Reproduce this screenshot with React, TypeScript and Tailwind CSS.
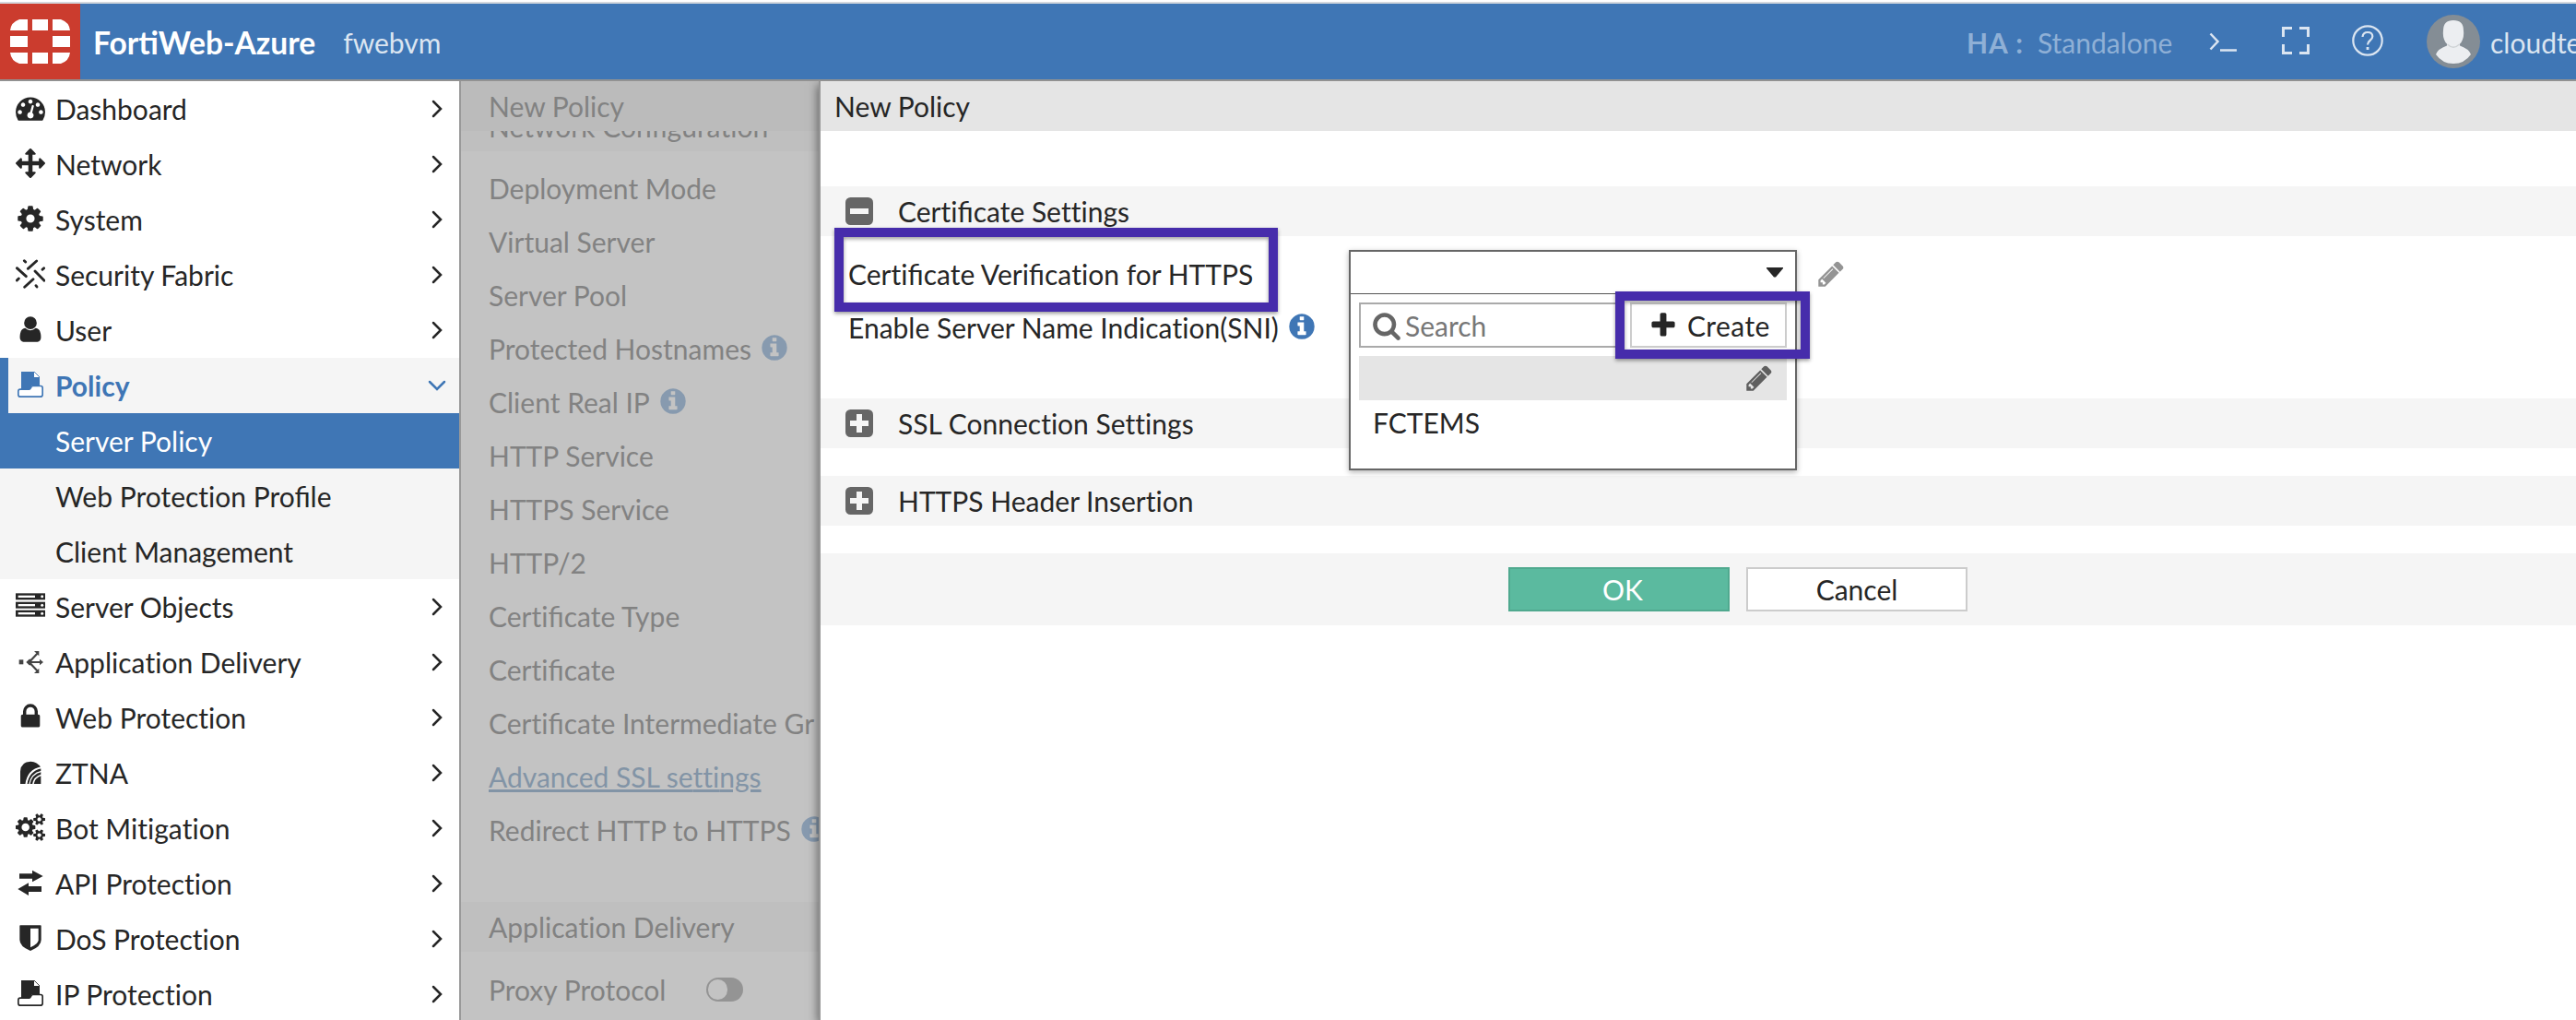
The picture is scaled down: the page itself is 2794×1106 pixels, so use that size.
import React from "react";

/* ---------- icon glyphs ---------- */

const G = {
  gauge:
    "M384 1152q0-53-37.5-90.5t-90.5-37.5-90.5 37.5-37.5 90.5 37.5 90.5 90.5 37.5 90.5-37.5 37.5-90.5zm192-448q0-53-37.5-90.5t-90.5-37.5-90.5 37.5-37.5 90.5 37.5 90.5 90.5 37.5 90.5-37.5 37.5-90.5zm428 481l101-382q6-26-7.5-48.5t-38.5-29.5-48 6.5-30 39.5l-101 382q-60 5-107 43.5t-63 98.5q-20 77 20 146t117 89 146-20 89-117q16-60-6-117t-72-91zm660-33q0-53-37.5-90.5t-90.5-37.5-90.5 37.5-37.5 90.5 37.5 90.5 90.5 37.5 90.5-37.5 37.5-90.5zm-640-640q0-53-37.5-90.5t-90.5-37.5-90.5 37.5-37.5 90.5 37.5 90.5 90.5 37.5 90.5-37.5 37.5-90.5zm448 192q0-53-37.5-90.5t-90.5-37.5-90.5 37.5-37.5 90.5 37.5 90.5 90.5 37.5 90.5-37.5 37.5-90.5zm320 448q0 261-141 483-19 29-54 29h-1402q-35 0-54-29-141-221-141-483 0-182 71-348t191-286 286-191 348-71 348 71 286 191 191 286 71 348z",
  arrows:
    "M1792 896q0 26-19 45l-256 256q-19 19-45 19t-45-19-19-45v-128h-384v384h128q26 0 45 19t19 45-19 45l-256 256q-19 19-45 19t-45-19l-256-256q-19-19-19-45t19-45 45-19h128v-384h-384v128q0 26-19 45t-45 19-45-19l-256-256q-19-19-19-45t19-45l256-256q19-19 45-19t45 19 19 45v128h384v-384h-128q-26 0-45-19t-19-45 19-45l256-256q19-19 45-19t45 19l256 256q19 19 19 45t-19 45-45 19h-128v384h384v-128q0-26 19-45t45-19 45 19l256 256q19 19 19 45z",
  cog: "M1152 896q0-106-75-181t-181-75-181 75-75 181 75 181 181 75 181-75 75-181zm512-109v222q0 12-8 23t-20 13l-185 28q-19 54-39 91 35 50 107 138 10 12 10 25t-9 23q-27 37-99 108t-94 71q-12 0-26-9l-138-108q-44 23-91 38-16 136-29 186-7 28-36 28h-222q-14 0-24.5-8.5t-11.5-21.5l-28-184q-49-16-90-37l-141 107q-10 9-25 9-14 0-25-11-126-114-165-168-7-10-7-23 0-12 8-23 15-21 51-66.5t54-70.5q-27-50-41-99l-183-27q-13-2-21-12.5t-8-23.5v-222q0-12 8-23t19-13l186-28q14-46 39-92-40-57-107-138-10-12-10-24 0-10 9-23 26-36 98.5-107.5t94.5-71.5q13 0 26 10l138 107q44-23 91-38 16-136 29-186 7-28 36-28h222q14 0 24.5 8.5t11.5 21.5l28 184q49 16 90 37l142-107q9-9 24-9 13 0 25 10 129 119 165 170 7 8 7 22 0 12-8 23-15 21-51 66.5t-54 70.5q26 50 41 98l183 28q13 2 21 12.5t8 23.5z",
  user: "M1536 1399q0 109-62.5 187t-150.5 78h-854q-88 0-150.5-78t-62.5-187q0-85 8.5-160.5t31.5-152 58.5-131 94-89 134.5-34.5q131 128 313 128t313-128q76 0 134.5 34.5t94 89 58.5 131 31.5 152 8.5 160.5zm-256-887q0 159-112.5 271.5t-271.5 112.5-271.5-112.5-112.5-271.5 112.5-271.5 271.5-112.5 271.5 112.5 112.5 271.5z",
  lock: "M640 768h512v-192q0-106-75-181t-181-75-181 75-75 181v192zm832 96v576q0 40-28 68t-68 28h-960q-40 0-68-28t-28-68v-576q0-40 28-68t68-28h32v-192q0-184 132-316t316-132 316 132 132 316v192h32q40 0 68 28t28 68z",
  cogs: "M832 896q0-106-75-181t-181-75-181 75-75 181 75 181 181 75 181-75 75-181zm768 512q0-52-38-90t-90-38-90 38-38 90q0 53 37.5 90.5t90.5 37.5 90.5-37.5 37.5-90.5zm0-1024q0-52-38-90t-90-38-90 38-38 90q0 53 37.5 90.5t90.5 37.5 90.5-37.5 37.5-90.5zm-384 421v185q0 10-7 19.5t-16 10.5l-155 24q-11 35-32 76 34 48 90 115 7 11 7 20 0 12-7 19-23 30-82.5 89.5t-78.5 59.5q-11 0-21-7l-115-90q-37 19-77 31-11 108-23 155-7 24-30 24h-186q-11 0-20-7.5t-10-17.5l-23-153q-34-10-75-31l-118 89q-7 7-20 7-11 0-21-8-144-133-144-160 0-9 7-19 10-14 41-53t47-61q-23-44-35-82l-152-24q-10-1-17-9.5t-7-19.5v-185q0-10 7-19.5t16-10.5l155-24q11-35 32-76-34-48-90-115-7-11-7-20 0-12 7-20 22-30 82-89t79-59q11 0 21 7l115 90q34-18 77-32 11-108 23-154 7-24 30-24h186q11 0 20 7.5t10 17.5l23 153q34 10 75 31l118-89q8-7 20-7 11 0 21 8 144 133 144 160 0 8-7 19-12 16-42 54t-45 60q23 48 34 82l152 23q10 2 17 10.5t7 19.5zm640 533v140q0 16-149 31-12 27-30 52 51 113 51 138 0 4-4 7-122 71-124 71-8 0-46-47t-52-68q-20 2-30 2t-30-2q-14 21-52 68t-46 47q-2 0-124-71-4-3-4-7 0-25 51-138-18-25-30-52-149-15-149-31v-140q0-16 149-31 13-29 30-52-51-113-51-138 0-4 4-7 4-2 35-20t59-34 30-16q8 0 46 46.5t52 67.5q20-2 30-2t30 2q51-71 92-112l6-2q4 0 124 70 4 3 4 7 0 25-51 138 17 23 30 52 149 15 149 31zm0-1024v140q0 16-149 31-12 27-30 52 51 113 51 138 0 4-4 7-122 71-124 71-8 0-46-47t-52-68q-20 2-30 2t-30-2q-14 21-52 68t-46 47q-2 0-124-71-4-3-4-7 0-25 51-138-18-25-30-52-149-15-149-31v-140q0-16 149-31 13-29 30-52-51-113-51-138 0-4 4-7 4-2 35-20t59-34 30-16q8 0 46 46.5t52 67.5q20-2 30-2t30 2q51-71 92-112l6-2q4 0 124 70 4 3 4 7 0 25-51 138 17 23 30 52 149 15 149 31z",
  info: "M1152 1376v-160q0-14-9-23t-23-9h-96v-512q0-14-9-23t-23-9h-320q-14 0-23 9t-9 23v160q0 14 9 23t23 9h96v320h-96q-14 0-23 9t-9 23v160q0 14 9 23t23 9h448q14 0 23-9t9-23zm-128-896v-160q0-14-9-23t-23-9h-192q-14 0-23 9t-9 23v160q0 14 9 23t23 9h192q14 0 23-9t9-23zm640 416q0 209-103 385.5t-279.5 279.5-385.5 103-385.5-103-279.5-279.5-103-385.5 103-385.5 279.5-279.5 385.5-103 385.5 103 279.5 279.5 103 385.5z",
  pencil:
    "M491 1536l91-91-235-235-91 91v107h128v128h107zm523-928q0-22-22-22-10 0-17 7l-542 542q-7 7-7 17 0 22 22 22 10 0 17-7l542-542q7-7 7-17zm-54-192l416 416-832 832h-416v-416zm683 96q0 53-37 90l-166 166-416-416 166-165q36-38 90-38 53 0 91 38l235 234q37 39 37 91z",
  search:
    "M1216 832q0-185-131.5-316.5t-316.5-131.5-316.5 131.5-131.5 316.5 131.5 316.5 316.5 131.5 316.5-131.5 131.5-316.5zm512 832q0 52-38 90t-90 38q-54 0-90-38l-343-342q-179 124-399 124-143 0-273.5-55.5t-225-150-150-225-55.5-273.5 55.5-273.5 150-225 225-150 273.5-55.5 273.5 55.5 225 150 150 225 55.5 273.5q0 220-124 399l343 343q37 37 37 90z",
  plus: "M1600 736v192q0 40-28 68t-68 28h-416v416q0 40-28 68t-68 28h-192q-40 0-68-28t-28-68v-416h-416q-40 0-68-28t-28-68v-192q0-40 28-68t68-28h416v-416q0-40 28-68t68-28h192q40 0 68 28t28 68v416h416q40 0 68 28t28 68z",
};

function Glyph({ d, className = "", viewBox = "0 0 1792 1792" }: { d: string; className?: string; viewBox?: string }) {
  return (
    <svg viewBox={viewBox} className={`size-8 shrink-0 ${className}`} fill="currentColor">
      <path d={d} />
    </svg>
  );
}

/* Lato joins "t" and "i"; keep the two letters apart while "fi" still joins. */
function T({ children, className = "" }: { children: string; className?: string }) {
  return (
    <span className={className}>
      {children.split(/(t+i)/).map((part, i) =>
        i % 2 ? (
          <span key={i} className="[font-variant-ligatures:none]">
            {part}
          </span>
        ) : (
          part
        ),
      )}
    </span>
  );
}

function Box96({ children }: { children: React.ReactNode }) {
  return (
    <svg viewBox="0 0 96 96" className="size-8 shrink-0" fill="currentColor">
      {children}
    </svg>
  );
}

const FabricIcon = () => (
  <Box96>
    <path
      d="M28 5l4 4M40 31L68 6M4 29l30 27M87 34l5-5M63 39l30 31M4 69l6-6M29 91l28-26M66 86l3 4"
      fill="none"
      stroke="currentColor"
      strokeWidth="8.5"
      strokeLinecap="round"
    />
  </Box96>
);

const TrayIcon = () => (
  <Box96>
    <path d="M18 6H60L78 24V52H52L46 66H18z" />
    <path d="M60 6V24H78z" fill="white" />
    <path d="M60 6L78 24" stroke="currentColor" strokeWidth="2.5" />
    <path
      d="M15 63.500H44Q47 63.500 49 59Q51 52.500 56 52.500H81Q87.500 52.500 87.500 59V80Q87.500 87.500 80 87.500H15Q8.500 87.500 8.500 80V70Q8.500 63.500 15 63.500z"
      fill="white"
      stroke="currentColor"
      strokeWidth="5"
    />
  </Box96>
);

const ServersIcon = () => (
  <Box96>
    {[7, 35, 62].map((y) => (
      <g key={y}>
        <rect x="0" y={y} width="96" height="21" />
        <rect x="8" y={y + 7} width="55" height="7" fill="white" />
        <circle cx="86" cy={y + 10.5} r="4.500" fill="white" />
      </g>
    ))}
  </Box96>
);

const BranchIcon = () => (
  <Box96>
    <g className="text-[#444]">
      <rect x="11" y="43" width="14" height="15" fill="currentColor" />
      <path d="M44 51L70 23M44 51H82M44 51L70 79" stroke="currentColor" strokeWidth="6.500" fill="none" />
      <path d="M34 51L44 41H50V61H44zM60 15H76V31zM60 87H76V71zM78 41L90 51L78 61z" fill="currentColor" />
    </g>
  </Box96>
);

const ZtnaIcon = () => (
  <Box96>
    <path d="M15 87V46Q17 14 49 14Q70 14 82 34V87z" />
    <g fill="none" stroke="white">
      <path d="M34 90Q40 42 84 34" strokeWidth="6" />
      <path d="M44 90Q50 53 84 46" strokeWidth="4" />
      <path d="M56 90Q60 65 84 58" strokeWidth="4.500" />
    </g>
  </Box96>
);

const SwapIcon = () => (
  <Box96>
    <path d="M12 19H54V8L89 27L54 46V35H12zM84 78H42V90L7 69L42 49V60H84z" />
  </Box96>
);

const ShieldIcon = () => (
  <Box96>
    <path d="M15 7H81Q83 7 83 9V54Q83 76 48 90Q13 76 13 54V9Q13 7 15 7z" />
    <path d="M48 17H74V55Q74 68 48 79z" fill="white" />
  </Box96>
);

const Chevron = () => (
  <svg viewBox="0 0 20 20" className="size-5" fill="none" stroke="#262626" strokeWidth="2.5" strokeLinecap="round">
    <path d="M6 2L14 10L6 18" />
  </svg>
);

const ChevronDown = () => (
  <svg viewBox="0 0 20 20" className="size-5" fill="none" stroke="#3f76b5" strokeWidth="2.5" strokeLinecap="round">
    <path d="M2 6L10 14L18 6" />
  </svg>
);

/* ---------- header ---------- */

function Logo() {
  return (
    <div className="flex h-full w-[87px] items-center justify-center bg-[#cb3c2e]">
      <svg viewBox="0 0 65 48" className="h-12 w-[65px]" fill="white">
        <path d="M10 0H19V12H0Q1 3 10 0zM24 0H41V12H24zM46 0H55Q64 3 65 12H46zM0 18H19V30H0zM46 18H65V30H46zM0 36H19V48H10Q1 45 0 36zM24 36H41V48H24zM46 36H65Q64 45 55 48H46z" />
      </svg>
    </div>
  );
}

function Header() {
  return (
    <header className="mt-0.5 flex h-[86px] shrink-0 items-center border-t-2 border-b-2 border-t-[#d4d8dd] border-b-[#929292] bg-[#3f76b5] text-[30px] leading-9 text-[#dbe5f1]">
      <Logo />
      <span className="mt-px ml-[14px] text-[33.6px] font-bold text-white">FortiWeb-Azure</span>
      <span className="mt-px ml-[30px]">fwebvm</span>
      <div className="ml-auto flex w-[747px] items-center">
        <span className="mt-px w-[77px] font-bold tracking-[1px] text-[#8fb0d6]">HA :</span>
        <span className="mt-px w-[185px] text-[#8fb0d6]">Standalone</span>
        <svg viewBox="0 0 32 32" className="size-8" fill="none" stroke="#dbe5f1" strokeWidth="2.500">
          <path d="M2.500 7.500L10.500 16L2.500 24.500M13 25.500H31" />
        </svg>
        <svg viewBox="0 0 30 30" className="mb-[2px] ml-[48px] size-[30px]" fill="none" stroke="#dbe5f1" strokeWidth="3">
          <path d="M1.500 11V1.500H11M19 1.500H28.500V11M28.500 19V28.500H19M11 28.500H1.500V19" />
        </svg>
        <svg viewBox="0 0 34 34" className="mb-[2px] ml-[46px] size-[34px]" fill="none" stroke="#dbe5f1" strokeWidth="2.200">
          <circle cx="17" cy="17" r="15.700" />
          <path d="M11.500 13Q12 8 17 8Q22.300 8 22.300 12.500Q22.300 15 19.500 17Q17 18.800 17 21.500" />
          <path d="M17 24V27" strokeWidth="2.800" />
        </svg>
        <svg viewBox="0 0 58 58" className="ml-[47px] size-[58px]">
          <circle cx="29" cy="29" r="29" fill="#848d95" />
          <path d="M29 53Q17 53 10 43Q12 37 22 33.500V30H36V33.500Q46 37 48 43Q41 53 29 53z" fill="#eceef1" />
          <path d="M18 17Q18 6 29 6Q40 6 40 17Q41 24 37.500 30Q33 35.500 29 35.500Q25 35.500 20.500 30Q17 24 18 17z" fill="#eceef1" />
          <path d="M22.500 32Q29 38.500 35.500 32" fill="none" stroke="#cfd3d6" strokeWidth="1.200" />
        </svg>
        <span className="mt-px ml-[11px]">cloudte</span>
      </div>
    </header>
  );
}

/* ---------- sidebar ---------- */

function NavItem({ icon, label }: { icon: React.ReactNode; label: string }) {
  return (
    <div className="flex h-[60px] items-center pr-[14px] pl-[17px]">
      <span className="mb-[2px]">{icon}</span>
      <T className="ml-[11px] flex-1">{label}</T>
      <Chevron />
    </div>
  );
}

function Sidebar() {
  return (
    <nav className="w-[500px] shrink-0 border-r-2 border-[#999] bg-white">
      <NavItem icon={<Glyph d={G.gauge} />} label="Dashboard" />
      <NavItem icon={<Glyph d={G.arrows} />} label="Network" />
      <NavItem icon={<Glyph d={G.cog} />} label="System" />
      <NavItem icon={<FabricIcon />} label="Security Fabric" />
      <NavItem icon={<Glyph d={G.user} />} label="User" />
      <div className="flex h-[60px] items-center border-l-[9px] border-[#3f76b5] bg-[#f5f5f5] pr-[14px] pl-2 font-bold text-[#3f76b5]">
        <span className="mb-[2px]">
          <TrayIcon />
        </span>
        <span className="ml-[11px] flex-1">Policy</span>
        <ChevronDown />
      </div>
      <div className="flex h-[60px] items-center bg-[#3f76b5] pl-[60px] text-white">Server Policy</div>
      <div className="flex h-[60px] items-center bg-[#f5f5f5] pl-[60px]">
        <T>Web Protection Profile</T>
      </div>
      <div className="flex h-[60px] items-center bg-[#f5f5f5] pl-[60px]">Client Management</div>
      <NavItem icon={<ServersIcon />} label="Server Objects" />
      <NavItem icon={<BranchIcon />} label="Application Delivery" />
      <NavItem icon={<Glyph d={G.lock} />} label="Web Protection" />
      <NavItem icon={<ZtnaIcon />} label="ZTNA" />
      <NavItem icon={<Glyph d={G.cogs} viewBox="-64 0 1920 1792" />} label="Bot Mitigation" />
      <NavItem icon={<SwapIcon />} label="API Protection" />
      <NavItem icon={<ShieldIcon />} label="DoS Protection" />
      <NavItem icon={<TrayIcon />} label="IP Protection" />
    </nav>
  );
}

/* ---------- dimmed policy form ---------- */

const FIELDS: { label: string; info?: boolean; link?: boolean }[] = [
  { label: "Deployment Mode" },
  { label: "Virtual Server" },
  { label: "Server Pool" },
  { label: "Protected Hostnames", info: true },
  { label: "Client Real IP", info: true },
  { label: "HTTP Service" },
  { label: "HTTPS Service" },
  { label: "HTTP/2" },
  { label: "Certificate Type" },
  { label: "Certificate" },
  { label: "Certificate Intermediate Gr" },
  { label: "Advanced SSL settings", link: true },
  { label: "Redirect HTTP to HTTPS", info: true },
];

function DimmedForm() {
  return (
    <section className="w-[388px] shrink-0 overflow-hidden bg-[#c3c3c3] whitespace-nowrap text-[#828282]">
      <div className="relative z-10 flex h-[54px] items-center bg-[#bbb] pl-[30px]">New Policy</div>
      <div className="-mt-8 flex h-[54px] items-center bg-[#bfbfbf] pl-[30px]">
        <T>Network Configuration</T>
      </div>
      <div className="mt-[11px]">
        {FIELDS.map((f) => (
          <div key={f.label} className="flex h-[58px] items-center pl-[30px]">
            <T className={f.link ? "text-[#8294a6] underline" : ""}>{f.label}</T>
            {f.info && <Glyph d={G.info} className="mb-[3px] ml-[9px] text-[#879aaf]" />}
          </div>
        ))}
      </div>
      <div className="mt-[49px] flex h-[54px] items-center bg-[#bfbfbf] pl-[30px]">
        <T>Application Delivery</T>
      </div>
      <div className="mt-3 flex h-[58px] items-center pl-[30px]">
        <span className="w-[236px]">Proxy Protocol</span>
        <span className="flex h-[26px] w-10 rounded-full bg-[#949494] p-[2px]">
          <span className="h-full w-[21px] rounded-full bg-[#c3c3c3]" />
        </span>
      </div>
    </section>
  );
}

/* ---------- certificate panel ---------- */

function SectionBar({ title, open = false }: { title: string; open?: boolean }) {
  return (
    <div className="flex h-[54px] items-center bg-[#f5f5f5] pl-[27px]">
      <svg viewBox="0 0 30 30" className="size-[30px]">
        <rect width="30" height="30" rx="5.500" fill="#666" />
        <rect x="5" y="12" width="20" height="6" fill="#f5f5f5" />
        {!open && <rect x="12" y="5" width="6" height="20" fill="#f5f5f5" />}
      </svg>
      <T className="ml-[27px]">{title}</T>
    </div>
  );
}

function CertificateSelect() {
  return (
    <div className="absolute top-[3px] left-[573px] z-10 h-[239px] w-[486px] border-2 border-[#666] bg-white shadow-[0_2px_6px_rgba(0,0,0,0.3)]">
      <div className="flex h-[46px] items-center justify-end border-b border-[#555] pr-[13px]">
        <svg viewBox="0 0 18 11" className="h-[11px] w-[18px]">
          <path d="M0 0H18V1L10 10.500H8L0 1z" fill="#262626" />
        </svg>
      </div>
      <div className="mt-[9px] flex px-[9px]">
        <div className="flex h-[49px] w-[282px] items-center border-2 border-[#aaa] pl-[12px] text-[#777]">
          <Glyph d={G.search} className="text-[#666]" />
          <span className="ml-[4px]">Search</span>
        </div>
        <div className="ml-3 flex h-[49px] w-[170px] items-center border-2 border-[#ccc] pl-[18px]">
          <Glyph d={G.plus} />
          <span className="ml-[10px] tracking-[0.4px]">Create</span>
        </div>
      </div>
      <div className="mx-[9px] mt-[9px] flex h-12 items-center justify-end bg-[#e5e5e5] pr-[14px]">
        <Glyph d={G.pencil} className="text-[#5f5f5f]" />
      </div>
      <div className="flex h-12 items-center pl-6">FCTEMS</div>
      <div className="absolute top-[43px] left-[287px] h-[73px] w-[211px] border-[10px] border-[#462cab] shadow-[0_2px_4px_rgba(0,0,0,0.4),inset_0_2px_4px_rgba(0,0,0,0.4)]" />
    </div>
  );
}

function CertificatePanel() {
  return (
    <section className="relative z-20 flex-1 border-l-2 border-[#969696] bg-white shadow-[-1px_4px_10px_rgba(0,0,0,0.5)]">
      <div className="flex h-[54px] items-center bg-[#e5e5e5] pl-[15px]">New Policy</div>
      <div className="mt-[60px]">
        <SectionBar title="Certificate Settings" open />
      </div>
      <div className="relative mt-3 flex h-[58px] items-center pl-[30px]">
        <T>Certificate Verification for HTTPS</T>
        <div className="absolute -top-[21px] left-[15px] h-[91px] w-[481px] border-[10px] border-[#462cab] shadow-[0_2px_4px_rgba(0,0,0,0.4),inset_0_2px_4px_rgba(0,0,0,0.4)]" />
        <CertificateSelect />
        <Glyph d={G.pencil} className="absolute top-[13px] left-[1080px] text-[#949494]" />
      </div>
      <div className="flex h-[58px] items-center pl-[30px]">
        <T>Enable Server Name Indication(SNI)</T>
        <Glyph d={G.info} className="mb-[3px] ml-[9px] text-[#3f76b5]" />
      </div>
      <div className="mt-12 flex flex-col gap-[30px]">
        <SectionBar title="SSL Connection Settings" />
        <SectionBar title="HTTPS Header Insertion" />
      </div>
      <div className="mt-[30px] flex h-[78px] items-center justify-center gap-[18px] bg-[#f5f5f5]">
        <button className="h-12 w-60 border-2 border-[#50a98f] bg-[#5bba9f] pl-2 text-white">OK</button>
        <button className="h-12 w-60 border-2 border-[#ccc] bg-white">Cancel</button>
      </div>
    </section>
  );
}

export default function App() {
  return (
    <div className="h-[1106px] w-full overflow-hidden bg-white font-['Lato',sans-serif] text-[30px] leading-9 text-[#262626]">
      <div className="flex h-full w-[2880px] flex-col overflow-hidden">
        <Header />
        <main className="flex min-h-0 flex-1 overflow-hidden">
          <Sidebar />
          <DimmedForm />
          <CertificatePanel />
        </main>
      </div>
    </div>
  );
}
